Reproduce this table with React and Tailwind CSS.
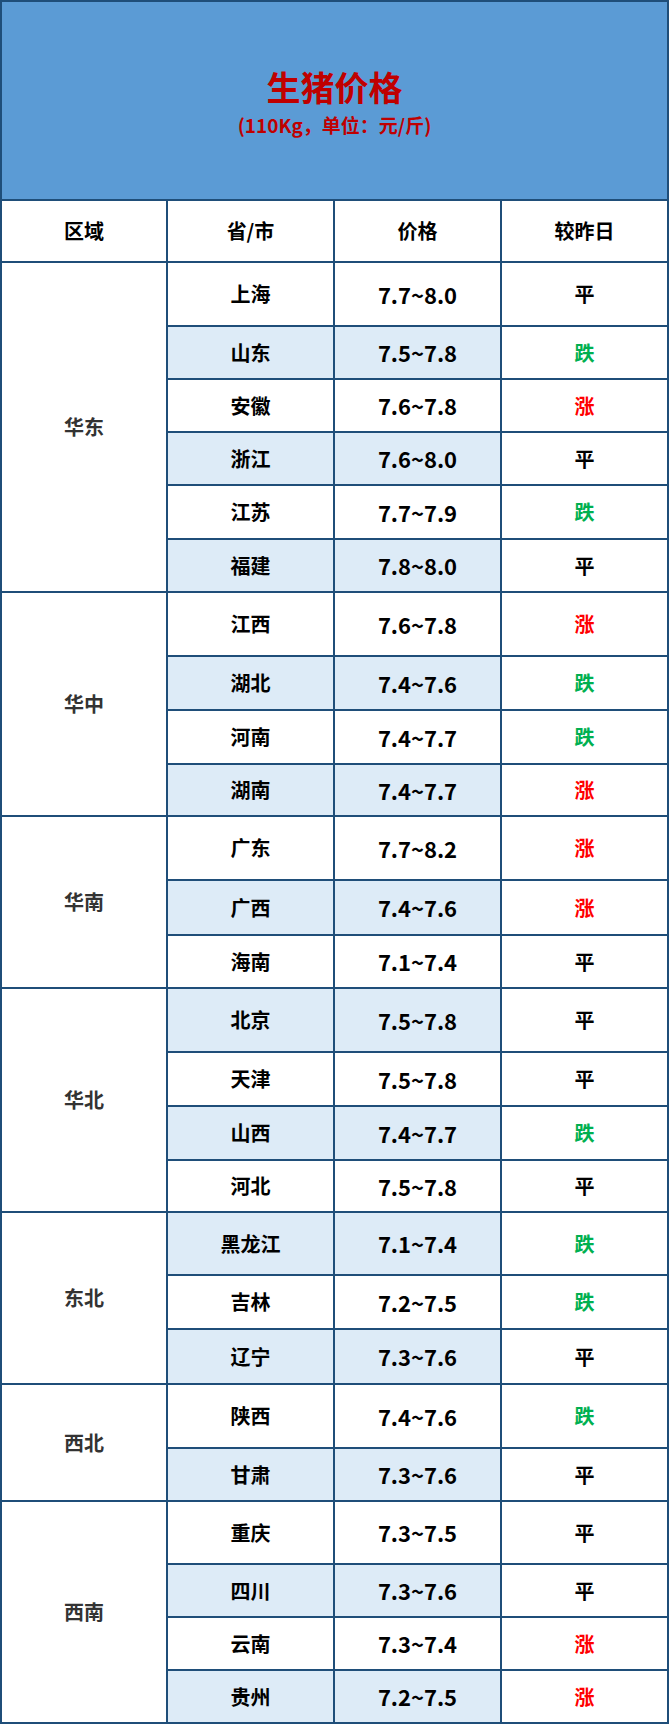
const groups = [
  { region: '华东', rows: [
    ['上海', '7.7~8.0', '平', 62], ['山东', '7.5~7.8', '跌', 51], ['安徽', '7.6~7.8', '涨', 51],
    ['浙江', '7.6~8.0', '平', 51], ['江苏', '7.7~7.9', '跌', 52], ['福建', '7.8~8.0', '平', 51],
  ] },
  { region: '华中', rows: [
    ['江西', '7.6~7.8', '涨', 62], ['湖北', '7.4~7.6', '跌', 52], ['河南', '7.4~7.7', '跌', 52], ['湖南', '7.4~7.7', '涨', 50],
  ] },
  { region: '华南', rows: [
    ['广东', '7.7~8.2', '涨', 62], ['广西', '7.4~7.6', '涨', 53], ['海南', '7.1~7.4', '平', 51],
  ] },
  { region: '华北', rows: [
    ['北京', '7.5~7.8', '平', 62], ['天津', '7.5~7.8', '平', 52], ['山西', '7.4~7.7', '跌', 52], ['河北', '7.5~7.8', '平', 50],
  ] },
  { region: '东北', rows: [
    ['黑龙江', '7.1~7.4', '跌', 61], ['吉林', '7.2~7.5', '跌', 52], ['辽宁', '7.3~7.6', '平', 53],
  ] },
  { region: '西北', rows: [
    ['陕西', '7.4~7.6', '跌', 62], ['甘肃', '7.3~7.6', '平', 51],
  ] },
  { region: '西南', rows: [
    ['重庆', '7.3~7.5', '平', 61], ['四川', '7.3~7.6', '平', 51], ['云南', '7.3~7.4', '涨', 51], ['贵州', '7.2~7.5', '涨', 51],
  ] },
]

const trendColor = {
  '平': 'text-black',
  '跌': 'text-[#00b050]',
  '涨': 'text-[#ff0000]',
}

const font = { fontFamily: '"Noto Sans CJK SC", "Noto Sans", sans-serif' }

export default function App() {
  let idx = 0

  return (
    <div className="w-[669px] bg-[#1f4e79] p-[2px]" style={font}>
      <div className="flex h-[197px] flex-col items-center justify-center bg-[#5b9bd5] pt-[3px] text-[#c00000]">
        <div className="text-[34px] font-bold leading-[40px]">生猪价格</div>
        <div className="mt-[6px] text-[19px] font-bold leading-[24px]">(110Kg，单位：元/斤)</div>
      </div>

      <div className="mt-[2px] grid grid-cols-[164px_165px_165px_165px] gap-[2px]">
        {['区域', '省/市', '价格', '较昨日'].map((h) => (
          <div key={h} className="flex h-[60px] items-center justify-center bg-white text-[20px] font-bold text-black">
            {h}
          </div>
        ))}
      </div>

      {groups.map((g) => (
        <div key={g.region} className="mt-[2px] flex gap-[2px]">
          <div className="flex w-[164px] items-center justify-center bg-white text-[20px] font-bold text-[#333333]">
            {g.region}
          </div>
          <div className="flex flex-1 flex-col gap-[2px]">
            {g.rows.map(([prov, price, trend, h]) => {
              const shaded = idx++ % 2 === 1
              const cell = shaded ? 'bg-[#ddebf7]' : 'bg-white'
              return (
                <div key={prov} className="grid grid-cols-[165px_165px_165px] gap-[2px]" style={{ height: h }}>
                  <div className={`flex items-center justify-center text-[20px] font-bold text-black ${cell}`}>{prov}</div>
                  <div className={`flex items-center justify-center text-[22px] font-bold text-black ${cell}`}>{price}</div>
                  <div className={`flex items-center justify-center bg-white text-[20px] font-bold ${trendColor[trend]}`}>{trend}</div>
                </div>
              )
            })}
          </div>
        </div>
      ))}
    </div>
  )
}
